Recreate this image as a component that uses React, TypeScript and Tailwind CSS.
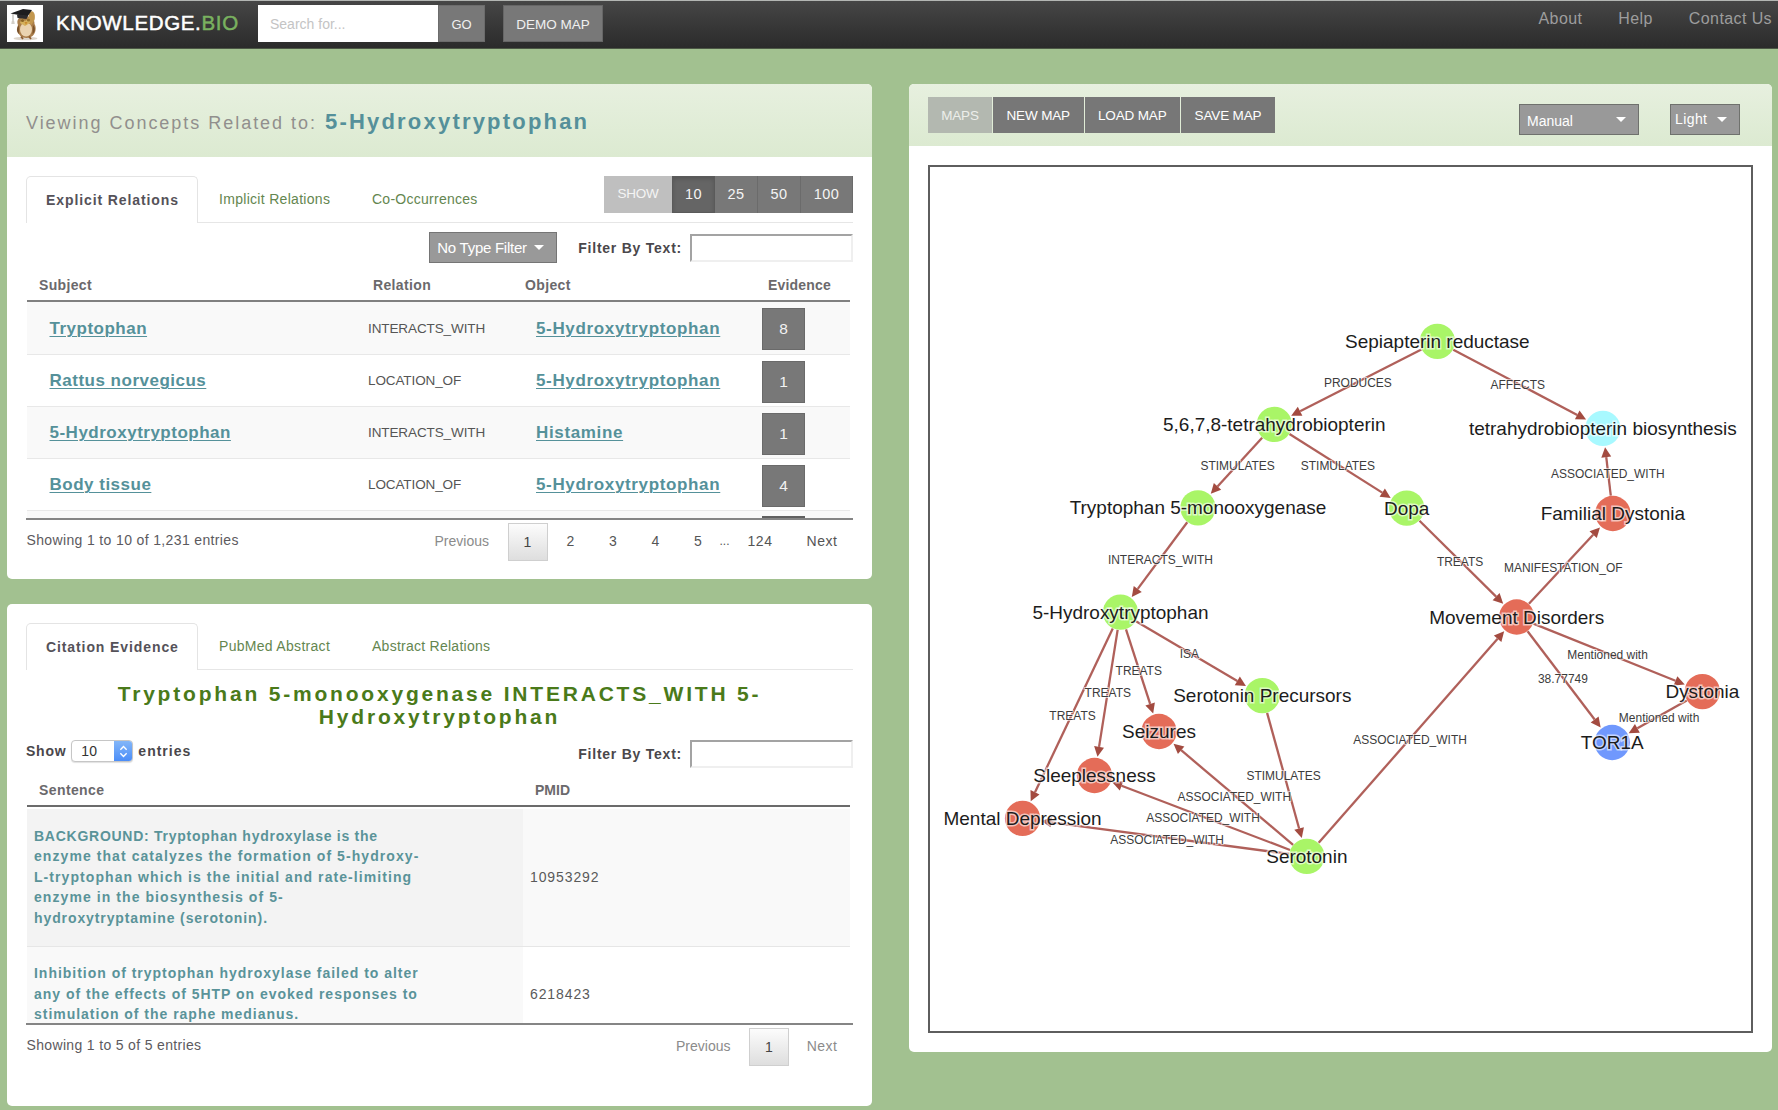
import React from "react";

const relations = [
  { subject: "Tryptophan", relation: "INTERACTS_WITH", object: "5-Hydroxytryptophan", evidence: "8" },
  { subject: "Rattus norvegicus", relation: "LOCATION_OF", object: "5-Hydroxytryptophan", evidence: "1" },
  { subject: "5-Hydroxytryptophan", relation: "INTERACTS_WITH", object: "Histamine", evidence: "1" },
  { subject: "Body tissue", relation: "LOCATION_OF", object: "5-Hydroxytryptophan", evidence: "4" },
];

type GraphNode = { x: number; y: number; label: string; fill: string };

const GREEN = "#a9f567";
const RED = "#e46c58";

const nodes: Record<string, GraphNode> = {
  sepiapterin: { x: 1437.3, y: 341.3, label: "Sepiapterin reductase", fill: GREEN },
  thb: { x: 1274, y: 424.5, label: "5,6,7,8-tetrahydrobiopterin", fill: GREEN },
  biosynthesis: { x: 1603, y: 428.5, label: "tetrahydrobiopterin biosynthesis", fill: "#a8f9ff" },
  monooxygenase: { x: 1197.6, y: 508, label: "Tryptophan 5-monooxygenase", fill: GREEN },
  dopa: { x: 1406.6, y: 508.3, label: "Dopa", fill: GREEN },
  familial: { x: 1613, y: 513.7, label: "Familial Dystonia", fill: RED },
  htp: { x: 1120, y: 612.5, label: "5-Hydroxytryptophan", fill: GREEN },
  movement: { x: 1516.7, y: 617.3, label: "Movement Disorders", fill: RED },
  precursors: { x: 1262, y: 696, label: "Serotonin Precursors", fill: GREEN },
  dystonia: { x: 1702.6, y: 692, label: "Dystonia", fill: RED },
  seizures: { x: 1158.6, y: 732, label: "Seizures", fill: RED },
  tor1a: { x: 1612.3, y: 743, label: "TOR1A", fill: "#7098fd" },
  sleeplessness: { x: 1094, y: 776, label: "Sleeplessness", fill: RED },
  depression: { x: 1022, y: 819, label: "Mental Depression", fill: RED },
  serotonin: { x: 1306.6, y: 857, label: "Serotonin", fill: GREEN },
};

const edges: { from: string; to: string; label: string; x: number; y: number }[] = [
  { from: "sepiapterin", to: "thb", label: "PRODUCES", x: 1357.7, y: 382.7 },
  { from: "sepiapterin", to: "biosynthesis", label: "AFFECTS", x: 1517.7, y: 385 },
  { from: "thb", to: "monooxygenase", label: "STIMULATES", x: 1237.3, y: 465.7 },
  { from: "thb", to: "dopa", label: "STIMULATES", x: 1337.7, y: 465.7 },
  { from: "familial", to: "biosynthesis", label: "ASSOCIATED_WITH", x: 1608, y: 474.3 },
  { from: "monooxygenase", to: "htp", label: "INTERACTS_WITH", x: 1160, y: 559.6 },
  { from: "dopa", to: "movement", label: "TREATS", x: 1460, y: 562.3 },
  { from: "movement", to: "familial", label: "MANIFESTATION_OF", x: 1563.3, y: 568.3 },
  { from: "movement", to: "dystonia", label: "Mentioned with", x: 1607.7, y: 655.3 },
  { from: "movement", to: "tor1a", label: "38.77749", x: 1563, y: 679.3 },
  { from: "dystonia", to: "tor1a", label: "Mentioned with", x: 1659.3, y: 718.3 },
  { from: "serotonin", to: "movement", label: "ASSOCIATED_WITH", x: 1410, y: 739.7 },
  { from: "htp", to: "precursors", label: "ISA", x: 1189, y: 654 },
  { from: "htp", to: "seizures", label: "TREATS", x: 1138.3, y: 671 },
  { from: "htp", to: "sleeplessness", label: "TREATS", x: 1107.3, y: 692.7 },
  { from: "htp", to: "depression", label: "TREATS", x: 1072, y: 715.7 },
  { from: "precursors", to: "serotonin", label: "STIMULATES", x: 1283.3, y: 776 },
  { from: "serotonin", to: "seizures", label: "ASSOCIATED_WITH", x: 1234, y: 797.7 },
  { from: "serotonin", to: "sleeplessness", label: "ASSOCIATED_WITH", x: 1202.7, y: 818 },
  { from: "serotonin", to: "depression", label: "ASSOCIATED_WITH", x: 1166.7, y: 840 },
];

function OwlLogo() {
  return (
    <svg viewBox="0 0 36 37" className="h-[37px] w-[36px] bg-white">
      <ellipse cx="18.5" cy="33.5" rx="12" ry="1.8" fill="#ddd6cc" />
      <path d="M11 20c-2-5 1-9 7-9s10 3 9.500 8c2 3 1.500 9-2 12-3 2.500-9 2.500-12 0-3-3-4-7-2.500-11z" fill="#a97d4a" />
      <path d="M22 8c4-5 7 1 5.500 7l-3 5-3-3z" fill="#c2974f" />
      <ellipse cx="19" cy="24.500" rx="6" ry="7" fill="#ead3b0" />
      <path d="M15 13l3 3 4-3 1 5-5 3-5-3z" fill="#d5b15c" />
      <circle cx="15.500" cy="15.500" r="1.600" fill="#8a6425" />
      <circle cx="21.500" cy="15" r="1.600" fill="#94702c" />
      <path d="M17.500 17h3l-1.500 3z" fill="#c98b2f" />
      <path d="M12 20c-3 3-2.500 7 0 9zM26 20c3 3 2 7-.5 9z" fill="#7a532d" />
      <path d="M14 31.500l2 2.500M22 31.500l2 2.500" stroke="#8c5a2e" strokeWidth="1.800" />
      <path d="M3.500 8.500L16 4l9 1-4.500 6.500z" fill="#1d1d1f" />
      <path d="M10 9.500l11 1-1.500 3.500-9-1z" fill="#2b2a2c" />
      <path d="M6 9v7" stroke="#99948c" strokeWidth=".8" />
      <path d="M4.800 16h2.400l.5 3H4.300z" fill="#d3cfc8" />
    </svg>
  );
}

function Caret({ className = "" }: { className?: string }) {
  return (
    <svg viewBox="0 0 10 5" className={`h-[5px] w-[10px] ${className}`}>
      <path d="M0 0h10L5 5z" fill="#fff" />
    </svg>
  );
}

function NavBar() {
  return (
    <header className="flex h-[49px] items-start border-t border-b border-t-[#b3b6b3] border-b-[#4c5745] bg-linear-to-b from-[#464646] to-[#2b2b2b] pl-[7px] pt-[4px]">
      <OwlLogo />
      <div className="ml-[13px] h-[37px] w-[202px] whitespace-nowrap text-[20.5px] leading-[35px] tracking-[0.65px] text-white [-webkit-text-stroke:0.5px]">
        KNOWLEDGE.<span className="text-[#79b15f]">BIO</span>
      </div>
      <div className="h-[37px] w-[180px] bg-white pl-[12px] text-[14px] leading-[38px] text-[#c4c4c4]">Search for...</div>
      <div className="h-[37px] w-[47px] border border-[#6c6c6c] bg-[#787878] text-center text-[13px] leading-[37px] text-[#f0f0f0]">GO</div>
      <div className="ml-[18px] h-[37px] w-[100px] border border-[#666] bg-[#787878] text-center text-[13.5px] leading-[37px] text-[#f0f0f0]">DEMO MAP</div>
      <nav className="ml-auto flex gap-[36px] pr-[6px] pt-[3.500px] text-[16px] leading-[20px] tracking-[0.4px] text-[#9d9d9d]">
        <span>About</span>
        <span>Help</span>
        <span>Contact Us</span>
      </nav>
    </header>
  );
}

function Tabs({ active, second, third, children }: { active: string; second: string; third: string; children?: React.ReactNode }) {
  return (
    <div className="mt-[19px] flex h-[47px] border-b border-[#e6e6e6] whitespace-nowrap text-[14px] leading-[47px]">
      <div className="h-[47px] w-[172px] rounded-t-[5px] border border-b-0 border-[#e4e4e4] bg-white pl-[19px] font-bold tracking-[0.9px] text-[#555259]">
        {active}
      </div>
      <div className="w-[152px] pl-[21px] tracking-[0.3px] text-[#64864f]">{second}</div>
      <div className="pl-[22px] tracking-[0.26px] text-[#64864f]">{third}</div>
      {children}
    </div>
  );
}

function FilterByText() {
  return (
    <>
      <span className="mt-px mr-[8px] text-[14px] font-bold tracking-[0.76px] text-[#4a474b]">Filter By Text:</span>
      <div className="h-[28px] w-[163px] border-2 border-t-[#a3a3a3] border-r-[#efefef] border-b-[#efefef] border-l-[#a3a3a3] bg-white" />
    </>
  );
}

function PageCurrent() {
  return (
    <div className="-mt-[0.5px] h-[38px] w-[40px] border border-[#cfcfcf] bg-linear-to-b from-[#fcfcfc] to-[#dedede] text-center leading-[36px] text-[#444]">1</div>
  );
}

function RelationsCard() {
  return (
    <section className="h-[495px] overflow-hidden rounded-[5px] bg-white">
      <div className="flex h-[73px] items-baseline bg-linear-to-b from-[#e7f0df] to-[#dcead1] pl-[19px] leading-[76px]">
        <span className="text-[18px] tracking-[1.97px] text-[#918f8d]">Viewing Concepts Related to:</span>
        <span className="ml-[8px] text-[22px] font-bold tracking-[2.2px] text-[#55909a]">5-Hydroxytryptophan</span>
      </div>
      <div className="pl-[19px] pr-[19px]">
        <Tabs active="Explicit Relations" second="Implicit Relations" third="Co-Occurrences">
          <div className="ml-auto flex h-[37px] text-center text-[14.5px] leading-[36px] tracking-[0.4px] text-[#f4f4f4]">
            <div className="w-[68px] bg-[#bfbfbf] text-[13.5px] tracking-[-0.3px]">SHOW</div>
            <div className="w-[43px] border border-[#5a5a5a] bg-[#656565] leading-[34px] shadow-[inset_0_2px_4px_rgba(0,0,0,.15)]">10</div>
            <div className="w-[43px] border-r border-[#6b6b6b] bg-[#787878]">25</div>
            <div className="w-[43px] border-r border-[#6b6b6b] bg-[#787878]">50</div>
            <div className="w-[52px] border-r border-[#6b6b6b] bg-[#787878]">100</div>
          </div>
        </Tabs>
        <div className="mt-[9px] flex h-[31px] items-center justify-end">
          <div className="mr-[21px] flex h-[31px] w-[128px] items-center border border-[#757575] bg-[#999] pl-[7px] whitespace-nowrap text-[15px] tracking-[-0.26px] text-white">
            <span className="pt-[2px]">No Type Filter</span>
            <Caret className="ml-[7px]" />
          </div>
          <FilterByText />
        </div>
        <div className="ml-[1px] mr-[3px] grid h-[39px] grid-cols-[334px_152px_243px_1fr] border-b-2 border-[#808080] pl-[12px] pt-[14px] text-[14px] leading-[16px] font-bold tracking-[0.35px] text-[#6b696c]">
          <span>Subject</span>
          <span>Relation</span>
          <span>Object</span>
          <span className="tracking-[0.2px]">Evidence</span>
        </div>
        <div className="h-[218px] overflow-hidden border-b-2 border-[#858585]">
          {relations.map((r, i) => (
            <div
              key={i}
              className={`ml-[1px] mr-[3px] grid grid-cols-[318.500px_168px_226px_1fr] items-center border-b border-[#e8e8e8] pl-[22.500px] ${i === 0 ? "h-[53px]" : "h-[52px]"} ${i % 2 === 0 ? "bg-[#f9f9f9]" : "bg-white"}`}
            >
              <span className="pt-px text-[17px] font-bold tracking-[0.5px] text-[#55919a] underline decoration-1 underline-offset-[2px]">{r.subject}</span>
              <span className="pt-[2px] text-[13.5px] tracking-[-0.1px] text-[#555]">{r.relation}</span>
              <span className="pt-px text-[17px] font-bold tracking-[0.65px] text-[#55919a] underline decoration-1 underline-offset-[2px]">{r.object}</span>
              <span className="mt-[2px] block h-[42px] w-[43px] border border-[#6a6a6a] bg-[#787878] text-center text-[15.5px] leading-[39px] text-[#f2f2f2]">{r.evidence}</span>
            </div>
          ))}
          <div className="ml-[1px] mr-[3px] h-[52px] bg-[#f9f9f9] pl-[735px] pt-[5px]">
            <div className="h-[42px] w-[43px] bg-[#606060]" />
          </div>
        </div>
        <div className="flex h-[44px] pt-[3px] whitespace-nowrap text-[14px] leading-[37px] text-[#555]">
          <span className="-mt-[1.500px] ml-[0.5px] tracking-[0.36px] text-[#5c5a5e]">Showing 1 to 10 of 1,231 entries</span>
          <span className="ml-auto w-[73px] text-[#8b8b8b]">Previous</span>
          <PageCurrent />
          <div className="flex pl-[2px] text-center tracking-[0.5px]">
            <span className="w-[42.500px]">2</span>
            <span className="w-[42.500px]">3</span>
            <span className="w-[42.500px]">4</span>
            <span className="w-[42.500px]">5</span>
            <span className="w-[7.500px] text-[12px] tracking-normal">...</span>
            <span className="w-[66px]">124</span>
            <span className="mr-[2px] w-[58px]">Next</span>
          </div>
        </div>
      </div>
    </section>
  );
}

function EvidenceCard() {
  return (
    <section className="mt-[25px] h-[502px] overflow-hidden rounded-[5px] bg-white px-[19px]">
      <Tabs active="Citation Evidence" second="PubMed Abstract" third="Abstract Relations" />
      <h2 className="mt-[12px] text-center text-[21px] leading-[23px] font-bold tracking-[2.8px] text-[#4a7a1a]">
        Tryptophan 5-monooxygenase INTERACTS_WITH 5-
        <br />
        Hydroxytryptophan
      </h2>
      <div className="mt-[12px] flex h-[28px] items-center">
        <div className="-mt-[6px] flex items-center text-[14px] font-bold text-[#4a474b]">
          <span className="pt-px tracking-[0.75px]">Show</span>
          <div className="mx-[5px] flex h-[22px] w-[62px] overflow-hidden rounded-[4px] border border-[#c6c6c6] bg-white shadow-[0_1px_1px_rgba(0,0,0,.12)]">
            <span className="flex-1 pl-[9px] text-[14px] leading-[21px] font-normal text-[#333]">10</span>
            <span className="flex w-[18px] items-center justify-center bg-linear-to-b from-[#83b6f8] to-[#4b8df8]">
              <svg viewBox="0 0 10 14" className="h-[13px] w-[9px]" fill="none" stroke="#fff" strokeWidth="1.500">
                <path d="M1.500 5L5 1.500 8.500 5M1.500 9L5 12.500 8.500 9" />
              </svg>
            </span>
          </div>
          <span className="pt-px tracking-[1px]">entries</span>
        </div>
        <div className="ml-auto flex items-center">
          <FilterByText />
        </div>
      </div>
      <div className="ml-[1px] mr-[3px] grid h-[39px] grid-cols-[496px_1fr] border-b-2 border-[#6b6b6b] pl-[12px] pt-[14px] text-[14px] leading-[16px] font-bold tracking-[0.4px] text-[#6b696c]">
        <span>Sentence</span>
        <span className="tracking-normal">PMID</span>
      </div>
      <div className="h-[218px] overflow-hidden border-b-2 border-[#858585] pt-[2px]">
        <div className="ml-[1px] mr-[3px] grid h-[138px] grid-cols-[496px_1fr] border-b border-[#e6e6e6] bg-[#f9f9f9]">
          <p className="bg-[#f3f3f3] pt-[16.500px] pl-[7px] whitespace-nowrap text-[14px] leading-[20.500px] font-bold tracking-[1.07px] text-[#5a9399]">
            <span className="tracking-[0.74px]">BACKGROUND: Tryptophan hydroxylase is the</span>
            <br />
            enzyme that catalyzes the formation of 5-hydroxy-
            <br />
            L-tryptophan which is the initial and rate-limiting
            <br />
            enzyme in the biosynthesis of 5-
            <br />
            <span className="tracking-[0.9px]">hydroxytryptamine (serotonin).</span>
          </p>
          <span className="self-center pl-[7px] text-[14px] tracking-[0.89px] text-[#5a5a5a]">10953292</span>
        </div>
        <div className="ml-[1px] mr-[3px] grid h-[94.500px] grid-cols-[496px_1fr]">
          <p className="bg-[#f9f9f9] pt-[16px] pl-[7px] whitespace-nowrap text-[14px] leading-[20.500px] font-bold tracking-[0.98px] text-[#5a9399]">
            Inhibition of tryptophan hydroxylase failed to alter
            <br />
            any of the effects of 5HTP on evoked responses to
            <br />
            stimulation of the raphe medianus.
          </p>
          <span className="self-center pl-[7px] text-[14px] tracking-[0.89px] text-[#5a5a5a]">6218423</span>
        </div>
      </div>
      <div className="flex h-[44px] pt-[3px] whitespace-nowrap text-[14px] leading-[37px] text-[#8b8b8b]">
        <span className="-mt-[1px] ml-[0.5px] tracking-[0.34px] text-[#5c5a5e]">Showing 1 to 5 of 5 entries</span>
        <span className="ml-auto w-[73px]">Previous</span>
        <PageCurrent />
        <span className="mr-[2px] ml-[4px] w-[58px] text-center tracking-[0.4px]">Next</span>
      </div>
    </section>
  );
}

function Graph() {
  return (
    <svg viewBox="929.3 167.3 822 864" className="block h-full w-full font-['Liberation_Sans',sans-serif]" textAnchor="middle">
      {edges.map((e, i) => {
        const a = nodes[e.from];
        const b = nodes[e.to];
        const len = Math.hypot(b.x - a.x, b.y - a.y);
        const ux = (b.x - a.x) / len;
        const uy = (b.y - a.y) / len;
        const tx = b.x - ux * 19;
        const ty = b.y - uy * 19;
        const bx = tx - ux * 10;
        const by = ty - uy * 10;
        return (
          <g key={i}>
            <line x1={a.x + ux * 18} y1={a.y + uy * 18} x2={bx} y2={by} stroke="#b0605a" strokeWidth="2.3" />
            <polygon points={`${tx},${ty} ${bx - uy * 5},${by + ux * 5} ${bx + uy * 5},${by - ux * 5}`} fill="#a34b40" />
          </g>
        );
      })}
      {Object.values(nodes).map((n) => (
        <circle key={n.label} cx={n.x} cy={n.y} r="17.7" fill={n.fill} />
      ))}
      {edges.map((e, i) => (
        <text key={i} x={e.x} y={e.y + 4.3} fontSize="12" fill="#3c3c3c" stroke="#fff" strokeOpacity=".6" strokeWidth="2" paintOrder="stroke">
          {e.label}
        </text>
      ))}
      {Object.values(nodes).map((n) => (
        <text key={n.label} x={n.x} y={n.y + 6.6} fontSize="19" fill="#1c1c1c" stroke="#fff" strokeOpacity=".6" strokeWidth="3" paintOrder="stroke">
          {n.label}
        </text>
      ))}
    </svg>
  );
}

function MapCard() {
  return (
    <section className="h-[968px] w-[863px] overflow-hidden rounded-[5px] bg-white">
      <div className="flex h-[62px] bg-linear-to-b from-[#e7f0df] to-[#dcead1] pt-[13px] pl-[19px] whitespace-nowrap text-white">
        <div className="flex h-[36px] gap-px text-center text-[13.5px] leading-[38px] tracking-[-0.15px]">
          <div className="w-[64px] bg-[#b3b8b0] text-[#eceeea]">MAPS</div>
          <div className="w-[90.500px] bg-[#777]">NEW MAP</div>
          <div className="w-[95.500px] bg-[#777]">LOAD MAP</div>
          <div className="w-[94px] bg-[#777]">SAVE MAP</div>
        </div>
        <div className="mt-[7px] mr-[31px] ml-auto flex h-[31px] w-[120px] items-center justify-between border border-[#6f716d] bg-[#999] pr-[12px] pl-[7px] text-[14px]">
          <span className="pt-[4px]">Manual</span>
          <Caret />
        </div>
        <div className="mt-[7px] mr-[32px] flex h-[31px] w-[70px] items-center justify-between border border-[#6f716d] bg-[#999] pr-[12px] pl-[4px] text-[14px] tracking-[0.4px]">
          <span>Light</span>
          <Caret />
        </div>
      </div>
      <div className="mx-[19px] mt-[19px] h-[868px] border-2 border-[#5e5e5e]">
        <Graph />
      </div>
    </section>
  );
}

export default function App() {
  return (
    <div className="h-[1110px] w-[1778px] overflow-hidden bg-[#a2c190] font-['Liberation_Sans',Arial,sans-serif]">
      <NavBar />
      <main className="flex gap-[37px] pt-[35px] pl-[7px]">
        <div className="w-[865px]">
          <RelationsCard />
          <EvidenceCard />
        </div>
        <MapCard />
      </main>
    </div>
  );
}
